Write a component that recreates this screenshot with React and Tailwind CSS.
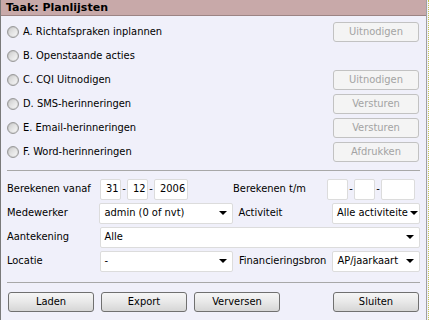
import React from "react";

const font = { fontFamily: "'DejaVu Sans Condensed', 'Liberation Sans', sans-serif" };

const Radio = ({ label }) => (
  <label className="flex items-center gap-[4px] text-[11px] text-black">
    <span className="w-[12px] h-[12px] rounded-full border border-[#9a9a9a] bg-gradient-to-br from-[#c8c8c8] via-[#e4e4e4] to-[#fafafa] shadow-[inset_0_0_1px_#888]" />
    <span>{label}</span>
  </label>
);

const DisabledButton = ({ children }) => (
  <button className="w-[86px] h-[20px] rounded-[3px] border border-[#c2c2c2] bg-[#f4f4f4] text-[11px] text-[#a3a3a3]">
    {children}
  </button>
);

const Button = ({ children, className = "" }) => (
  <button
    className={
      "w-[86px] h-[20px] rounded-[3px] border border-[#707070] bg-gradient-to-b from-[#f6f6f6] via-[#e8e8e8] to-[#d6d6d6] text-[11px] text-black " +
      className
    }
  >
    {children}
  </button>
);

const Box = ({ value, w }) => (
  <div className={"h-[21px] bg-white border border-[#dcdcdc] rounded-[2px] flex items-center pl-[5px] text-[11px] " + w}>
    {value}
  </div>
);

const Select = ({ value, w }) => (
  <div className={"h-[21px] bg-white border border-[#dcdcdc] rounded-[2px] flex items-center justify-between pl-[4px] pr-[5px] text-[11px] " + w}>
    <span className="whitespace-nowrap">{value}</span>
    <span className="shrink-0 w-0 h-0 border-l-[4px] border-r-[4px] border-t-[4px] border-l-transparent border-r-transparent border-t-black ml-[2px]" />
  </div>
);

const radios = [
  ["A. Richtafspraken inplannen", "Uitnodigen"],
  ["B. Openstaande acties", null],
  ["C. CQI Uitnodigen", "Uitnodigen"],
  ["D. SMS-herinneringen", "Versturen"],
  ["E. Email-herinneringen", "Versturen"],
  ["F. Word-herinneringen", "Afdrukken"],
];

export default function App() {
  return (
    <div className="w-[429px] h-[320px] flex bg-[#f0f0fa]" style={font}>
      <div className="w-[427px] h-full border-l border-[#7a7a7a] border-r border-r-[#a0a0a0] flex flex-col">
        {/* header */}
        <div
          className="h-[16px] bg-[#c8a9a9] border-b border-[#9c8484] pl-[5px] flex items-center text-[11px] font-bold text-black leading-none"
          style={{ fontFamily: "'DejaVu Sans', sans-serif" }}
        >
          Taak: Planlijsten
        </div>

        <div className="pl-[6px] pr-[7px] pt-[4px] flex flex-col">
          {radios.map(([label, btn]) => (
            <div key={label} className="h-[24px] flex items-center justify-between">
              <Radio label={label} />
              {btn && <DisabledButton>{btn}</DisabledButton>}
            </div>
          ))}
        </div>

        <div className="mx-[6px] mt-[6px] border-t border-[#a8a8a8]" />

        <div className="pl-[6px] pr-[6px] pt-[6px] flex flex-col text-[11px] text-black">
          <div className="h-[24px] flex items-center">
            <span className="w-[93px]">Berekenen vanaf</span>
            <Box value="31" w="w-[21px]" />
            <span className="w-[6px] text-center">-</span>
            <Box value="12" w="w-[21px]" />
            <span className="w-[6px] text-center">-</span>
            <Box value="2006" w="w-[34px]" />
            <span className="w-[45px]" />
            <span className="w-[94px]">Berekenen t/m</span>
            <Box value="" w="w-[21px]" />
            <span className="w-[6px] text-center">-</span>
            <Box value="" w="w-[21px]" />
            <span className="w-[6px] text-center">-</span>
            <Box value="" w="w-[34px]" />
          </div>
          <div className="h-[24px] flex items-center">
            <span className="w-[93px]">Medewerker</span>
            <Select value="admin (0 of nvt)" w="w-[134px]" />
            <span className="w-[6px]" />
            <span className="w-[94px]">Activiteit</span>
            <Select value="Alle activiteite" w="w-[88px]" />
          </div>
          <div className="h-[24px] flex items-center">
            <span className="w-[93px]">Aantekening</span>
            <Select value="Alle" w="w-[322px]" />
          </div>
          <div className="h-[24px] flex items-center">
            <span className="w-[93px]">Locatie</span>
            <Select value="-" w="w-[134px]" />
            <span className="w-[6px]" />
            <span className="w-[94px]">Financieringsbron</span>
            <Select value="AP/jaarkaart" w="w-[88px]" />
          </div>
        </div>

        <div className="mx-[6px] mt-[9px] border-t border-[#a8a8a8]" />

        <div className="pl-[7px] pr-[7px] pt-[9px] flex items-center">
          <Button>Laden</Button>
          <Button className="ml-[7px]">Export</Button>
          <Button className="ml-[7px]">Verversen</Button>
          <span className="flex-1" />
          <Button>Sluiten</Button>
        </div>
      </div>
      <div className="w-[2px] h-full border-r border-dotted border-[#c8c850]" />
    </div>
  );
}
